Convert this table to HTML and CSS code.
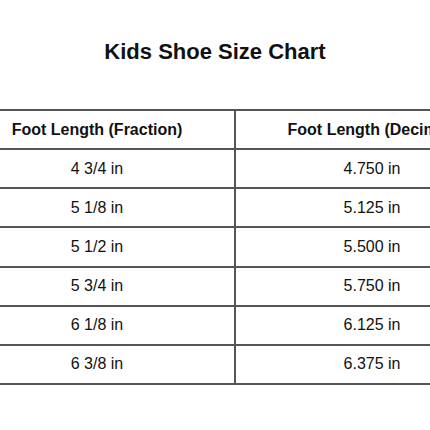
FILE: index.html
```html
<!DOCTYPE html>
<html>
<head>
<meta charset="utf-8">
<link rel="stylesheet" href="styles.css">
</head>
<body>
<div class="page">
  <h1 class="title">Kids Shoe Size Chart</h1>
  <div class="table-wrap">
    <table class="chart">
      <thead>
        <tr><th>Foot Length (Fraction)</th><th>Foot Length (Decimal)</th></tr>
      </thead>
      <tbody>
        <tr><td>4 3/4 in</td><td>4.750 in</td></tr>
        <tr><td>5 1/8 in</td><td>5.125 in</td></tr>
        <tr><td>5 1/2 in</td><td>5.500 in</td></tr>
        <tr><td>5 3/4 in</td><td>5.750 in</td></tr>
        <tr><td>6 1/8 in</td><td>6.125 in</td></tr>
        <tr><td>6 3/8 in</td><td>6.375 in</td></tr>
      </tbody>
    </table>
  </div>
</div>
</body>
</html>
```

FILE: styles.css
```css
html, body {
  margin: 0;
  padding: 0;
  background: #fff;
}
body {
  font-family: "Liberation Sans", Arial, sans-serif;
  color: #111;
  width: 430px;
  height: 430px;
  overflow: hidden;
}
.page {
  padding-top: 38px;
}
.title {
  margin: 0;
  text-align: center;
  font-size: 22px;
  font-weight: bold;
  line-height: 28px;
}
.table-wrap {
  margin-top: 43px;
  margin-left: -40px;
  width: 548px;
}
.chart {
  width: 548px;
  border-collapse: collapse;
  table-layout: fixed;
}
.chart th, .chart td {
  border-top: 2px solid #555;
  border-bottom: 2px solid #555;
  height: 37.15px;
  padding: 0;
  text-align: center;
  font-size: 16px;
  vertical-align: middle;
}
.chart th {
  font-weight: bold;
}
.chart th:first-child, .chart td:first-child {
  width: 274px;
  border-right: 2px solid #555;
}
```
